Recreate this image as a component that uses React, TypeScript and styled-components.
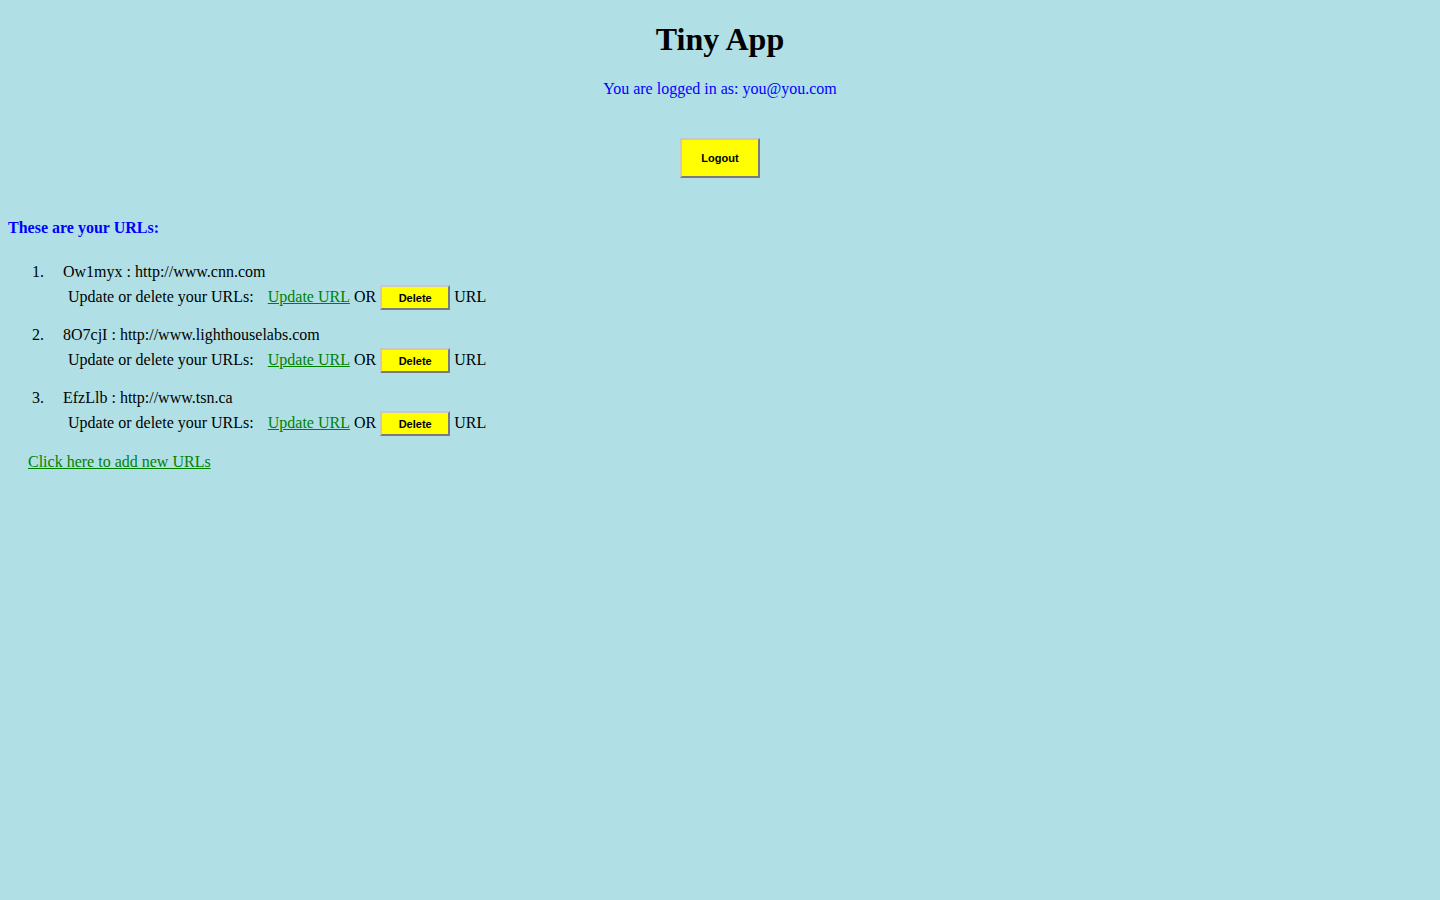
import React from "react";
import styled, { createGlobalStyle } from "styled-components";

const Global = createGlobalStyle`
  html, body { margin: 0; padding: 0; }
  body {
    background: #b0e0e6;
    font-family: "Liberation Serif", "Times New Roman", serif;
    font-size: 16px;
    color: #000;
  }
`;

const Page = styled.div`
  padding: 0 8px;
  display: flex;
  flex-direction: column;
`;

const Title = styled.h1`
  margin: 21px 0 0;
  font-size: 32px;
  font-weight: bold;
  line-height: 37px;
  text-align: center;
`;

const LoggedIn = styled.p`
  margin: 22px 0 0;
  line-height: 18px;
  text-align: center;
  color: #0000ff;
`;

const Center = styled.div`
  display: flex;
  justify-content: center;
  margin-top: 40px;
`;

const YellowButton = styled.button<{ $w: number; $h: number }>`
  width: ${(p) => p.$w}px;
  height: ${(p) => p.$h}px;
  padding: 0;
  background: #ffff00;
  border: 2px solid;
  border-color: #c8c8c8 #7a7a7a #7a7a7a #c8c8c8;
  font-family: "Liberation Sans", Arial, sans-serif;
  font-size: 11px;
  font-weight: bold;
  color: #000;
  cursor: pointer;
`;

const Heading = styled.h4`
  margin: 41px 0 0;
  font-size: 16px;
  font-weight: bold;
  line-height: 18px;
  color: #0000ff;
`;

const List = styled.ol`
  list-style: none;
  margin: 26px 0 0;
  padding: 0 0 0 24px;
  display: flex;
  flex-direction: column;
  gap: 16px;
`;

const Item = styled.li`
  display: flex;
`;

const Marker = styled.span`
  width: 31px;
  line-height: 18px;
`;

const ItemBody = styled.div`
  display: flex;
  flex-direction: column;
`;

const Line = styled.div`
  line-height: 18px;
`;

const Actions = styled.div`
  display: flex;
  align-items: baseline;
  margin-top: 4px;
  padding-left: 5px;
  line-height: 18px;
  white-space: pre;
`;

const GreenLink = styled.a`
  color: #008000;
  text-decoration: underline;
`;

const UpdateLink = styled(GreenLink)`
  margin-left: 14px;
`;

const AddLink = styled(GreenLink)`
  margin: 17px 0 0 20px;
  line-height: 18px;
  align-self: flex-start;
`;

const urls = [
  { id: "Ow1myx", url: "http://www.cnn.com" },
  { id: "8O7cjI", url: "http://www.lighthouselabs.com" },
  { id: "EfzLlb", url: "http://www.tsn.ca" },
];

export default function App() {
  return (
    <>
      <Global />
      <Page>
        <Title>Tiny App</Title>
        <LoggedIn>You are logged in as: you@you.com</LoggedIn>
        <Center>
          <YellowButton $w={80} $h={40}>Logout</YellowButton>
        </Center>
        <Heading>These are your URLs:</Heading>
        <List>
          {urls.map((u, i) => (
            <Item key={u.id}>
              <Marker>{i + 1}.</Marker>
              <ItemBody>
                <Line>
                  {u.id} : {u.url}
                </Line>
                <Actions>
                  {"Update or delete your URLs:"}
                  <UpdateLink href="#">Update URL</UpdateLink>
                  {" OR "}
                  <YellowButton $w={70} $h={25}>Delete</YellowButton>
                  {" URL"}
                </Actions>
              </ItemBody>
            </Item>
          ))}
        </List>
        <AddLink href="#">Click here to add new URLs</AddLink>
      </Page>
    </>
  );
}
